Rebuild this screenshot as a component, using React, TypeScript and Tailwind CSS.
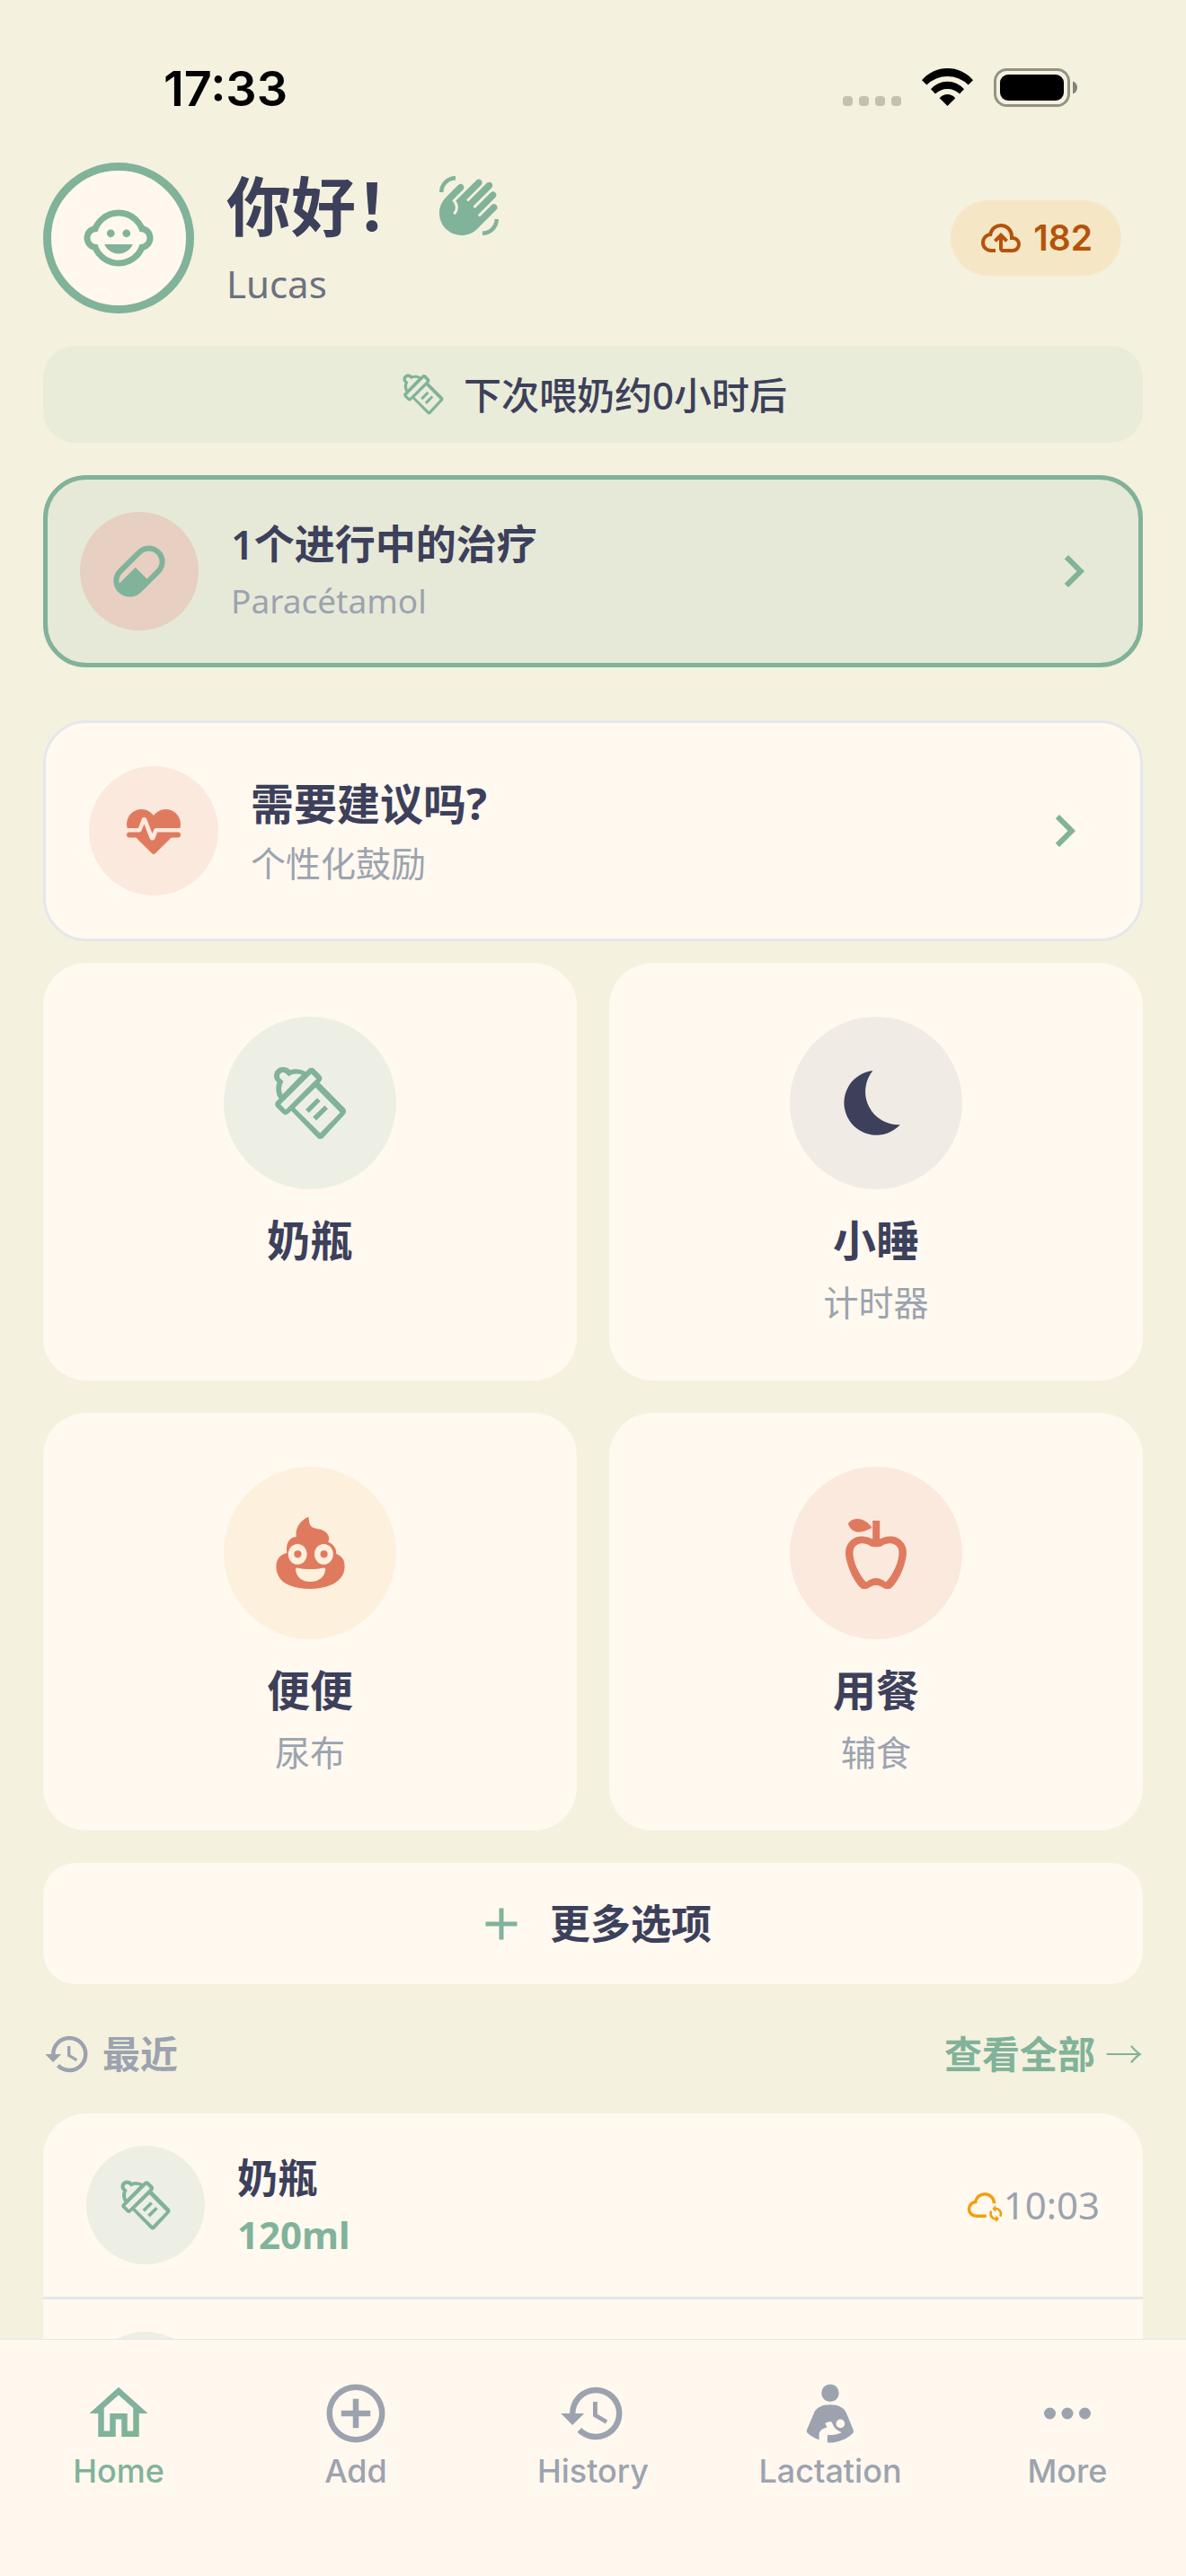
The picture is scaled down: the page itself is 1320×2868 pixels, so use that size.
import React from 'react';
import { MdChildCare, MdWavingHand } from 'react-icons/md';

const ICONS = {
  bottle:
    'M4.45 2C5.3 2 6 2.3 6.45 2.8C8 2.35 9.5 2.6 10.77 3.3L11.5 2.6C12 2.15 12.8 2.15 13.3 2.6L15 4.3C15.5 4.85 15.45 5.6 15 6L14.66 6.4L21.6 13.35C22.15 13.9 22.15 14.7 21.6 15.25L15.75 21.6C15.25 22.1 14.5 22.15 14 21.6L6.8 14.2L6 14.95C5.5 15.4 4.9 15.4 4.4 14.95L2.65 13.2C2.2 12.7 2.2 12 2.6 11.55L3.4 10.8C2.5 9.5 2.35 7.9 2.87 6.17C2.3 5.8 2 5.2 2 4.5C2 3.1 3.1 2 4.45 2M4.5 3.5C3.95 3.5 3.5 3.95 3.5 4.5C3.5 4.8 3.6 5 3.8 5.2L4.6 6C3.9 7.2 3.85 8.5 4.35 9.65L9.7 4.15C8.6 3.75 7.2 3.8 6.1 4.55L5.2 3.75C5 3.6 4.8 3.5 4.5 3.5M12.35 3.85L3.8 12.4L5.25 13.85L13.8 5.3L12.35 3.85M13.55 7.7L7.75 13.4L14.85 20.4L20.4 14.6L13.55 7.7M14 10.6L14.9 11.5L11.7 14.75L10.75 13.8L14 10.6M16.1 12.7L17 13.6L13.75 16.9L12.8 15.9L16.1 12.7Z',
  pill: 'M4.22,11.29L11.29,4.22C13.64,1.88 17.43,1.88 19.78,4.22C22.12,6.56 22.12,10.36 19.78,12.71L12.71,19.78C10.36,22.12 6.56,22.12 4.22,19.78C1.88,17.43 1.88,13.64 4.22,11.29M5.64,12.71C4.59,13.75 4.24,15.24 4.6,16.57L10.59,10.59L14.83,14.83L18.36,11.29C19.93,9.73 19.93,7.2 18.36,5.64C16.8,4.07 14.27,4.07 12.71,5.64L5.64,12.71Z',
  heart:
    'M7.5,4A5.5,5.5 0 0,0 2,9.5C2,10 2.09,10.5 2.22,11H6.3L7.57,7.63C7.87,6.83 9.05,6.75 9.43,7.63L11.5,13L12.09,11.58C12.22,11.25 12.57,11 13,11H21.78C21.91,10.5 22,10 22,9.5A5.5,5.5 0 0,0 16.5,4C14.64,4 13,4.93 12,6.34C11,4.93 9.36,4 7.5,4V4M3,12.5A1,1 0 0,0 2,13.5A1,1 0 0,0 3,14.5H5.44L11,20C12,20.9 12,20.9 13,20L18.56,14.5H21A1,1 0 0,0 22,13.5A1,1 0 0,0 21,12.5H13.4L12.47,14.8C12.07,15.81 10.92,15.67 10.55,14.83L8.5,9.5L7.54,11.83C7.39,12.21 7.05,12.5 6.6,12.5H3Z',
  moon: 'M11.1 3A9 9 0 1 0 18.7 18.07A9.25 9.25 0 0 1 11.1 3Z',
  poop: 'M11.5 2C11.9 2.6 11.5 4.2 12.7 4.85C13.6 5.3 14.7 5.2 15.7 5.75C17.1 6.5 17.7 7.8 17.05 8.95C18.5 9.6 19.5 10.8 19.3 12.25C21 12.9 21.65 13.9 21.65 15.8C21.65 18.3 19.9 20 17.9 20.9C14.5 22.4 9.5 22.3 6.3 21C4 20.1 2.6 18.2 2.6 15.8C2.6 13.8 3.6 12.4 5.6 12C5.2 9.8 6 7.6 8.2 7.5C7.8 5.2 9.1 3.2 11.2 2.1C11.3 2 11.4 2 11.5 2M8.55 9.5C7.1 9.5 5.95 10.8 5.95 12.35S7.1 15.2 8.55 15.2S11.15 13.9 11.15 12.35S10 9.5 8.55 9.5M8.6 11.3A1 1 0 0 1 8.6 13.35A1 1 0 0 1 8.6 11.3M15.85 9.5C14.4 9.5 13.25 10.8 13.25 12.35S14.4 15.2 15.85 15.2S18.45 13.9 18.45 12.35S17.3 9.5 15.85 9.5M15.9 11.3A1 1 0 0 1 15.9 13.35A1 1 0 0 1 15.9 11.3M8.4 16.1C8.1 16.1 8 16.3 8 16.6C8.2 18.7 9.9 20 12.1 20S16.1 18.7 16.3 16.6C16.3 16.3 16.2 16.1 15.8 16.1C13.5 16.6 10.8 16.6 8.4 16.1Z',
  apple:
    'M11.05 3H13.05V8.1C15.6 6.8 18.3 7.2 19.7 9.3C20.7 10.7 20.6 12.4 20.2 14C19.6 16.8 18.1 19.8 16.5 21.5C15.9 22.2 14.8 22.1 14.2 21.8C13.4 21.4 13 21 12 21C11 21 10.7 21.4 9.8 21.8C9.2 22.1 8.1 22.2 7.5 21.5C5.9 19.8 4.4 16.8 3.8 14C3.4 12.4 3.3 10.7 4.3 9.3C5.7 7.2 8.4 6.8 11.05 8.1V3M10.4 10.05C8.6 8.9 6.8 9.2 5.95 10.5C5.5 11.3 5.6 12.7 5.9 14C6.5 16.3 8 19 9.3 20.15C11 18.6 13 18.6 14.7 20.15C16 19 17.5 16.3 18.1 14C18.4 12.7 18.5 11.3 18.05 10.5C17.2 9.2 15.4 8.9 13.6 10.05C13 10.4 11 10.4 10.4 10.05M4.2 3.8C5.7 1.8 8.8 2 10.9 4.95C8.2 6.7 5.2 6.8 4.2 3.8Z',
  cloudUpload:
    'M6.5 20Q4.22 20 2.61 18.43 1 16.85 1 14.58 1 12.63 2.17 11.1 3.35 9.57 5.25 9.15 5.88 6.85 7.75 5.43 9.63 4 12 4 14.93 4 16.96 6.04 19 8.07 19 11 20.73 11.2 21.86 12.5 23 13.78 23 15.5 23 17.38 21.69 18.69 20.38 20 18.5 20H13Q12.18 20 11.59 19.41 11 18.83 11 18V12.85L9.4 14.4 8 13 12 9 16 13 14.6 14.4 13 12.85V18H18.5Q19.55 18 20.27 17.27 21 16.55 21 15.5 21 14.45 20.27 13.73 19.55 13 18.5 13H17V11Q17 8.93 15.54 7.46 14.08 6 12 6 9.93 6 8.46 7.46 7 8.93 7 11H6.5Q5.05 11 4.03 12.03 3 13.05 3 14.5 3 15.95 4.03 17 5.05 18 6.5 18H9V20Z',
  cloudSync:
    'M13 20H6.5Q4.22 20 2.61 18.43 1 16.85 1 14.58 1 12.63 2.17 11.1 3.35 9.57 5.25 9.15 5.88 6.85 7.75 5.43 9.63 4 12 4 14.93 4 16.96 6.04 19 8.07 19 11H17Q17 8.93 15.54 7.46 14.08 6 12 6 9.93 6 8.46 7.46 7 8.93 7 11H6.5Q5.05 11 4.03 12.03 3 13.05 3 14.5 3 15.95 4.03 17 5.05 18 6.5 18H13V20M19 12V13.5C21.21 13.5 23 15.29 23 17.5C23 18.32 22.75 19.08 22.33 19.71L21.24 18.62C21.41 18.28 21.5 17.9 21.5 17.5C21.5 16.12 20.38 15 19 15V16.5L16.75 14.25L19 12M19 23V21.5C16.79 21.5 15 19.71 15 17.5C15 16.68 15.25 15.92 15.67 15.29L16.76 16.38C16.59 16.72 16.5 17.1 16.5 17.5C16.5 18.88 17.62 20 19 20V18.5L21.25 20.75L19 23Z',
  chevron: 'M8.59,16.58L13.17,12L8.59,7.41L10,6L16,12L10,18L8.59,16.58Z',
  plus: 'M19,13H13V19H11V13H5V11H11V5H13V11H19V13Z',
  history:
    'M13.5,8H12V13L16.28,15.54L17,14.33L13.5,12.25V8M13,3A9,9 0 0,0 4,12H1L4.96,16.03L9,12H6A7,7 0 0,1 13,5A7,7 0 0,1 20,12A7,7 0 0,1 13,19C11.07,19 9.32,18.21 8.06,16.94L6.64,18.36C8.27,20 10.5,21 13,21A9,9 0 0,0 22,12A9,9 0 0,0 13,3',
  home: 'M12 5.69L17 10.19V18H15V12H9V18H7V10.19L12 5.69M12 3L2 12H5V20H11V14H13V20H19V12H22',
  add: 'M12,20C7.59,20 4,16.41 4,12C4,7.59 7.59,4 12,4C16.41,4 20,7.59 20,12C20,16.41 16.41,20 12,20M12,2A10,10 0 0,0 2,12A10,10 0 0,0 12,22A10,10 0 0,0 22,12A10,10 0 0,0 12,2M13,7H11V11H7V13H11V17H13V13H17V11H13V7Z',
  nursing:
    'M12 2A3 3 0 0 1 12 8A3 3 0 0 1 12 2M12 9C14.6 9 16.9 10 17.6 12L19.9 17.6C20.1 18.1 20 18.5 19.6 18.9C17.6 20.8 14.6 22 12 22H11.05V19.35C12.8 19.4 14.6 19.2 15.9 18.5C14.6 17.9 13.6 17.3 13.2 16.4L12.5 14.9C12 14.7 11 14.9 10.3 15.4L10.9 16.8C9.3 17.2 8.2 18 8.2 19.3V21.1C6.9 20.6 5.3 19.8 4.3 18.8C3.9 18.4 3.9 18 4 17.6L6.4 12C7 10 9.4 9 12 9M15.5 14A1.5 1.5 0 0 0 15.5 17A1.5 1.5 0 0 0 15.5 14Z',
  dots: 'M16,12A2,2 0 0,1 18,10A2,2 0 0,1 20,12A2,2 0 0,1 18,14A2,2 0 0,1 16,12M10,12A2,2 0 0,1 12,10A2,2 0 0,1 14,12A2,2 0 0,1 12,14A2,2 0 0,1 10,12M4,12A2,2 0 0,1 6,10A2,2 0 0,1 8,12A2,2 0 0,1 6,14A2,2 0 0,1 4,12Z',
};

type IconName = keyof typeof ICONS;

interface IconProps {
  name: IconName;
  className: string;
}

const Icon: React.FC<IconProps> = ({ name, className }) => (
  <svg viewBox="0 0 24 24" fill="currentColor" fillRule="evenodd" aria-hidden="true" className={`shrink-0 ${className}`}>
    <path d={ICONS[name]} />
  </svg>
);

const StatusBar: React.FC = () => (
  <div className="flex h-[66px] items-center justify-between pr-[72px] pl-[134px] text-black">
    <span className="font-[Inter,sans-serif] text-[54px] font-semibold">17:33</span>
    <svg viewBox="0 0 262 44" className="h-[44px] w-[262px]" aria-hidden="true">
      <g fill="#c4c1b1">
        <rect x="0" y="31" width="11" height="11" rx="4" />
        <rect x="18" y="31" width="11" height="11" rx="4" />
        <rect x="36" y="31" width="11" height="11" rx="4" />
        <rect x="54" y="31" width="11" height="11" rx="4" />
      </g>
      <g transform="translate(88 0)">
        <path d="M0 13.3A37.2 37.2 0 0 1 57 13.3L51.7 18.5A32.8 32.8 0 0 0 5.4 18.5Z" />
        <path d="M10 23.3A24.2 24.2 0 0 1 47 23.3L42 28.5A19.3 19.3 0 0 0 15 28.5Z" />
        <path d="M19.7 33.3A11.2 11.2 0 0 1 37.3 33.3L28.5 42Z" />
      </g>
      <rect x="169.5" y="1.5" width="82" height="40" rx="13" fill="none" stroke="#949285" strokeWidth="3" />
      <rect x="175" y="7" width="71" height="29" rx="9" />
      <path d="M256 14.5C259 15.5 261 18 261 21.5S259 27.5 256 28.5Z" fill="#858377" />
    </svg>
  </div>
);

const Header: React.FC = () => (
  <header className="flex items-center">
    <div className="flex size-[168px] shrink-0 items-center justify-center rounded-full border-9 border-[#81b29a] bg-[#fff8ee] text-[#81b29a]">
      <MdChildCare className="size-[84px]" />
    </div>
    <div className="ml-9 flex-1">
      <div className="flex items-center gap-[18px]">
        <h1 className="text-[72px] leading-[96px] font-bold">你好！</h1>
        <MdWavingHand className="size-[72px] text-[#81b29a]" />
      </div>
      <p className="mt-[6px] text-[42px] leading-[66px] text-[#6b7280]">Lucas</p>
    </div>
    <button className="mr-6 flex h-[84px] items-center gap-3 rounded-[42px] bg-[#f5e7c5] px-8 text-[#b45309]">
      <Icon name="cloudUpload" className="size-12" />
      <span className="font-[Inter,sans-serif] text-[39px] font-semibold">182</span>
    </button>
  </header>
);

interface TileProps {
  icon: IconName;
  label: string;
  hint?: string;
  tint: string;
}

const Tile: React.FC<TileProps> = ({ icon, label, hint, tint }) => (
  <button className="flex min-h-[465px] flex-col items-center rounded-[48px] bg-[#fff9ef] py-[60px]">
    <span className={`flex size-48 items-center justify-center rounded-full ${tint}`}>
      <Icon name={icon} className="size-24" />
    </span>
    <span className="mt-6 text-[48px] leading-[66px] font-bold">{label}</span>
    {hint && <span className="mt-[9px] text-[39px] leading-[54px] text-[#9ca3af]">{hint}</span>}
  </button>
);

const tiles: TileProps[] = [
  { icon: 'bottle', label: '奶瓶', tint: 'bg-[#eeefe4] text-[#81b29a]' },
  { icon: 'moon', label: '小睡', hint: '计时器', tint: 'bg-[#f0ebe4] text-[#3d405b]' },
  { icon: 'poop', label: '便便', hint: '尿布', tint: 'bg-[#fdf0dd] text-[#e07a5f]' },
  { icon: 'apple', label: '用餐', hint: '辅食', tint: 'bg-[#fbe9dd] text-[#e07a5f]' },
];

interface Entry {
  id: number;
  label?: string;
  amount?: string;
  time?: string;
}

const entries: Entry[] = [
  { id: 1, label: '奶瓶', amount: '120ml', time: '10:03' },
  { id: 2 },
];

const EntryRow: React.FC<{ entry: Entry }> = ({ entry }) => (
  <li className="flex items-center px-12 py-9">
    <div className="flex size-[132px] shrink-0 items-center justify-center rounded-full bg-[#eeefe4] text-[#81b29a]">
      <Icon name="bottle" className="size-[66px]" />
    </div>
    <div className="ml-9 flex-1">
      <p className="text-[45px] leading-[66px] font-bold">{entry.label}</p>
      <p className="text-[42px] leading-[60px] font-bold text-[#81b29a]">{entry.amount}</p>
    </div>
    {entry.time && (
      <div className="flex items-center">
        <Icon name="cloudSync" className="size-[42px] text-[#f59e0b]" />
        <span className="text-[42px] leading-[60px] text-[#9ca3af]">{entry.time}</span>
      </div>
    )}
  </li>
);

const tabs: { icon: IconName; label: string }[] = [
  { icon: 'home', label: 'Home' },
  { icon: 'add', label: 'Add' },
  { icon: 'history', label: 'History' },
  { icon: 'nursing', label: 'Lactation' },
  { icon: 'dots', label: 'More' },
];

const TabBar: React.FC = () => (
  <nav className="grid shrink-0 grid-cols-5 border-t border-[#e5e7eb] bg-[#fff8ee] pt-[43px] pb-24 font-[Inter,sans-serif]">
    {tabs.map((tab, i) => (
      <a
        key={tab.label}
        href="#"
        className={`flex flex-col items-center gap-1 ${i === 0 ? 'text-[#81b29a]' : 'text-[#9ca3af]'}`}
      >
        <Icon name={tab.icon} className="size-[78px]" />
        <span className="text-[36px] leading-[42px] font-medium">{tab.label}</span>
      </a>
    ))}
  </nav>
);

export default function App() {
  return (
    <div className="flex h-screen flex-col bg-[#f4f1de] font-['Noto_Sans','Noto_Sans_CJK_SC',sans-serif] text-[#3d405b]" lang="zh-CN">
      <main className="min-h-0 flex-1 overflow-hidden px-12 pt-[65px]">
        <StatusBar />
        <div className="mt-[50px]">
          <Header />
        </div>

        <div className="mt-9 flex h-[108px] items-center justify-center gap-[18px] rounded-[36px] bg-[#e9ecd8]">
          <Icon name="bottle" className="size-[54px] text-[#81b29a]" />
          <p className="text-[42px] font-medium">下次喂奶约0小时后</p>
        </div>

        <button className="mt-9 flex w-full items-center rounded-[48px] border-5 border-[#81b29a] bg-[#e6e9d7] p-9 text-left">
          <span className="flex size-[132px] shrink-0 items-center justify-center rounded-full bg-[#e7d0c1] text-[#81b29a]">
            <Icon name="pill" className="size-[72px]" />
          </span>
          <span className="ml-9 flex flex-1 flex-col gap-[6px]">
            <span className="text-[45px] leading-[60px] font-semibold">1个进行中的治疗</span>
            <span className="text-[37px] leading-[54px] text-[#9ca3af]">Paracétamol</span>
          </span>
          <Icon name="chevron" className="size-[72px] text-[#81b29a]" />
        </button>

        <button className="mt-[59px] flex w-full items-center rounded-[48px] border-3 border-[#e5e7eb] bg-[#fff9ef] p-12 text-left">
          <span className="flex size-36 shrink-0 items-center justify-center rounded-full bg-[#fbe9dd] text-[#e07a5f]">
            <Icon name="heart" className="size-[72px]" />
          </span>
          <span className="ml-9 flex flex-1 flex-col gap-[6px]">
            <span className="text-[48px] leading-[66px] font-bold">需要建议吗?</span>
            <span className="text-[39px] leading-[54px] text-[#9ca3af]">个性化鼓励</span>
          </span>
          <Icon name="chevron" className="size-[72px] text-[#81b29a]" />
        </button>

        <div className="mt-6 grid grid-cols-2 gap-9">
          {tiles.map((tile) => (
            <Tile key={tile.label} {...tile} />
          ))}
        </div>

        <button className="mt-9 flex h-[135px] w-full items-center justify-center gap-6 rounded-[36px] bg-[#fff9ef]">
          <Icon name="plus" className="size-[60px] text-[#81b29a]" />
          <span className="text-[45px] font-bold">更多选项</span>
        </button>

        <div className="mt-12 flex h-[60px] items-center justify-between text-[42px] leading-[60px] font-bold">
          <h2 className="flex items-center gap-3 text-[#9ca3af]">
            <Icon name="history" className="size-[54px]" />
            最近
          </h2>
          <a href="#" className="text-[#81b29a]">
            查看全部 <span className="font-light">→</span>
          </a>
        </div>

        <ul className="mt-9 divide-y-3 divide-[#e5e7eb] overflow-hidden rounded-[48px] bg-[#fff9ef]">
          {entries.map((entry) => (
            <EntryRow key={entry.id} entry={entry} />
          ))}
        </ul>
      </main>
      <TabBar />
    </div>
  );
}
